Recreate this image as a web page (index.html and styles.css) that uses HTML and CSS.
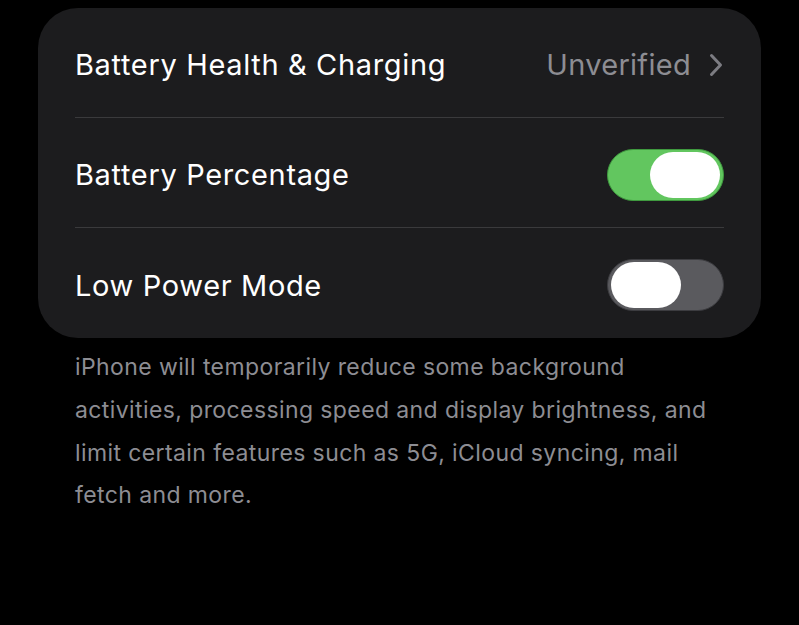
FILE: index.html
```html
<!DOCTYPE html>
<html lang="en">
<head>
<meta charset="utf-8">
<title>Battery</title>
<link rel="stylesheet" href="styles.css">
</head>
<body>
  <section class="group">
    <div class="row">
      <span class="label">Battery Health &amp; Charging</span>
      <span class="detail">
        <span class="value">Unverified</span>
        <svg class="chevron" width="14" height="24" viewBox="0 0 14 24"><path d="M2.5 2.5 L11.5 12 L2.5 21.5" fill="none" stroke="#7c7c82" stroke-width="3" stroke-linecap="round" stroke-linejoin="round"/></svg>
      </span>
    </div>
    <div class="row">
      <span class="label">Battery Percentage</span>
      <span class="switch on"><span class="knob"></span></span>
    </div>
    <div class="row last">
      <span class="label">Low Power Mode</span>
      <span class="switch off"><span class="knob"></span></span>
    </div>
  </section>
  <p class="footnote">iPhone will temporarily reduce some background<br>activities, processing speed and display brightness, and<br>limit certain features such as 5G, iCloud syncing, mail<br>fetch and more.</p>
</body>
</html>
```

FILE: styles.css
```css
html, body {
  margin: 0;
  background: #000;
}

body {
  font-family: Inter, "Noto Sans", "Liberation Sans", sans-serif;
  width: 799px;
  height: 625px;
  overflow: hidden;
}

.group {
  margin: 8px 38px 0 38px;
  background: #1c1c1e;
  border-radius: 40px;
  padding: 0 37px;
}

.row {
  height: 110px;
  display: flex;
  align-items: center;
  justify-content: space-between;
  border-bottom: 1px solid #3a3a3c;
  box-sizing: border-box;
  padding-top: 4px;
}

.row.last {
  border-bottom: none;
}

.label {
  color: #fff;
  font-size: 29px;
  letter-spacing: 0.65px;
}

.detail {
  display: flex;
  align-items: center;
  gap: 18px;
}

.value {
  color: #8d8d93;
  font-size: 29px;
  letter-spacing: 0.3px;
}

.chevron {
  display: block;
  margin-right: 1px;
}

.switch {
  width: 117px;
  height: 52px;
  border-radius: 26px;
  box-sizing: border-box;
  display: flex;
  align-items: center;
  padding: 0 3px;
}

.switch.on {
  background: #62c65f;
  border: 1.5px solid #3f9a3f;
  justify-content: flex-end;
}

.switch.off {
  background: #5a5a5e;
  border: 1.5px solid #3c3c40;
  justify-content: flex-start;
}

.knob {
  width: 70px;
  height: 46px;
  border-radius: 23px;
  background: #fff;
}

.footnote {
  margin: 8px 0 0 75px;
  color: #8d8d93;
  font-size: 23px;
  line-height: 42.8px;
  letter-spacing: 0.4px;
}
```
